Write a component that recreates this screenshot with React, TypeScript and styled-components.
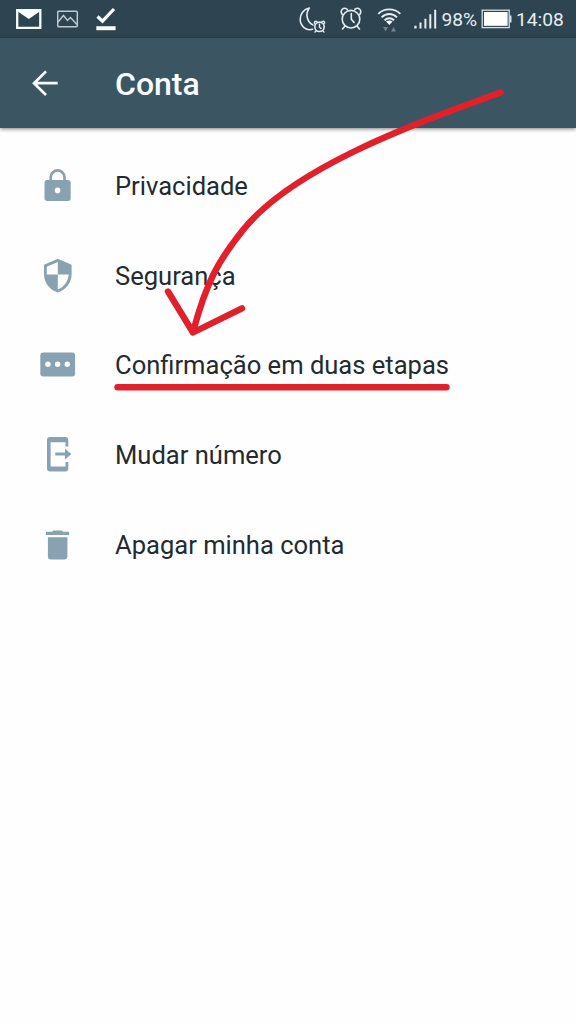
import React from "react";
import styled, { createGlobalStyle } from "styled-components";

const GlobalStyle = createGlobalStyle`
  * { box-sizing: border-box; }
  body {
    margin: 0;
    background: #fefefe;
    font-family: Roboto, "Liberation Sans", sans-serif;
  }
`;

const Screen = styled.div`
  position: relative;
  width: 576px;
  height: 1024px;
  overflow: hidden;
  background: #fefefe;
`;

const StatusBar = styled.header`
  display: flex;
  align-items: center;
  justify-content: space-between;
  height: 38px;
  padding: 0 13px 0 15px;
  background: #2f4451;
  color: #e3eef3;
`;

const StatusGroup = styled.div<{ $gap: number }>`
  display: flex;
  align-items: center;
  gap: ${(p) => p.$gap}px;
`;

const StatusText = styled.span<{ $width: number }>`
  width: ${(p) => p.$width}px;
  font-size: 19.2px;
  line-height: 38px;
  padding-top: 1px;
  text-align: right;
  white-space: nowrap;
`;

const Glyph = styled.svg`
  display: block;
  flex: none;
`;

const AppBar = styled.nav`
  display: flex;
  align-items: center;
  height: 90px;
  padding-left: 31px;
  background: #3b5563;
  color: #f6fcff;
  box-shadow: 0 1px 4px rgba(0, 0, 0, 0.5);
`;

const BackButton = styled.button`
  width: 84px;
  padding: 0;
  border: 0;
  background: none;
  color: inherit;
`;

const Title = styled.h1`
  margin: 0;
  padding-top: 1px;
  font-size: 32px;
  font-weight: 500;
  line-height: 40px;
`;

const List = styled.ul`
  margin: 0;
  padding: 13.4px 0 0;
  list-style: none;
`;

const Row = styled.li`
  display: flex;
  align-items: center;
  height: 89.6px;
`;

const IconCell = styled.span`
  display: flex;
  justify-content: center;
  width: 115px;
  color: #88a2b2;
`;

const Label = styled.span`
  color: #232b30;
  font-size: 25.55px;
  line-height: 32px;
  white-space: nowrap;
`;

const Annotation = styled.svg`
  position: absolute;
  top: 0;
  left: 0;
  pointer-events: none;
`;

const MailIcon = () => (
  <Glyph width="27" height="22" viewBox="15 8 27 22">
    <path d="M17.2 10.2H40.3V27.8H17.2Z" fill="none" stroke="#f7fcfe" strokeWidth="2.3" />
    <path d="M17 9.5H40.5V11L28.8 19L17 11Z" fill="#f7fcfe" />
  </Glyph>
);

const PictureIcon = () => (
  <Glyph width="23" height="20" viewBox="57 9 23 20" fill="none" stroke="#bccad1" strokeWidth="1.5">
    <rect x="57.7" y="11.2" width="19.6" height="15.6" rx="1" />
    <path d="M58 22L63.5 15.5L67.5 20.5L70.5 17.5L77 24.5" />
  </Glyph>
);

const DoneIcon = () => (
  <Glyph width="22" height="26" viewBox="95 6 22 26">
    <path d="M97.5 16.5L102.5 21.2L114 9" fill="none" stroke="#f7fcfe" strokeWidth="3.2" />
    <path d="M96.3 26.2H115.6V30.2H96.3Z" fill="#f7fcfe" />
  </Glyph>
);

const MoonIcon = () => (
  <Glyph width="28" height="28" viewBox="299 5 28 28" fill="none" stroke="currentColor" strokeWidth="1.6" strokeLinecap="round" strokeLinejoin="round">
    <path d="M312.6 29.3C306 31.2 300.3 26 300.2 19.6C300.1 13.7 303.9 9.2 309.3 8C305.5 13.2 306.2 21.6 313 25" />
    <circle cx="319.5" cy="26.8" r="4.7" />
    <path d="M319.5 24.2V27.3L321 28.4M314.6 23.5C313.8 21.6 315.3 20.8 317 21.7M324.4 23.5C325.2 21.6 323.7 20.8 322 21.7M316 31L315 32M323 31L324 32" strokeWidth="1.4" />
  </Glyph>
);

const AlarmIcon = () => (
  <Glyph width="24" height="26" viewBox="340 6 24 26" fill="none" stroke="currentColor" strokeWidth="1.6" strokeLinecap="round" strokeLinejoin="round">
    <circle cx="351" cy="19.2" r="8.8" />
    <path d="M351.3 13.5V19.3L354 22.4" />
    <path d="M342.2 14.5C339.5 10.5 343.4 6.4 347.3 9.3M359.8 14.5C362.5 10.5 358.6 6.4 354.7 9.3M345 26L342.5 29M357 26L359.5 29" />
  </Glyph>
);

const WifiIcon = () => (
  <Glyph width="24" height="26" viewBox="377 6 24 26" fill="none" stroke="currentColor" strokeWidth="1.9">
    <path d="M378.3 13.9C384.2 7.9 394.4 7.9 400.3 13.9M381.6 17.3C386 12.9 392.6 12.9 397 17.3M384.5 20.4C387.2 17.6 391.4 17.6 394.1 20.4" />
    <path d="M386 21.6C388 20 390.6 20 392.6 21.6L389.3 25Z" fill="#f7fcfe" stroke="none" />
    <path d="M383 27H388L385.5 31.5ZM391 31.5H396L393.5 27Z" fill="#71838d" stroke="none" />
  </Glyph>
);

const SignalIcon = () => (
  <Glyph width="23" height="22" viewBox="414 8 23 22">
    <path d="M414.3 25.8H416.6V28.6H414.3ZM419.5 22.5H421.5V28.6H419.5ZM424.4 18.7H426.4V28.6H424.4ZM429.3 14.3H431.3V28.6H429.3ZM434.2 9.7H436.2V28.6H434.2Z" fill="currentColor" />
  </Glyph>
);

const BatteryIcon = () => (
  <Glyph width="31" height="22" viewBox="481 8 31 22">
    <rect x="482.2" y="10.2" width="27" height="17.4" fill="none" stroke="#d5e0e5" strokeWidth="1.3" />
    <path d="M484 12H507.6V25.8H484Z" fill="#fff" />
    <path d="M509.5 15.5H511.5V22.5H509.5Z" fill="#d5e0e5" />
  </Glyph>
);

const BackIcon = () => (
  <Glyph width="28" height="28" viewBox="31 69 28 28" fill="none" stroke="currentColor" strokeWidth="2.7">
    <path d="M57.7 83.2H34M46 71.4L34 83.2L46 95" />
  </Glyph>
);

const LockIcon = () => (
  <Glyph width="28" height="34" viewBox="44 169 28 34">
    <path d="M50.7 181V177.3A6.9 6.9 0 0 1 64.5 177.3V181" fill="none" stroke="currentColor" strokeWidth="2.7" />
    <path fill="currentColor" fillRule="evenodd" d="M47.2 180H68A2.7 2.7 0 0 1 70.7 182.7V198.3A2.7 2.7 0 0 1 68 201H47.2A2.7 2.7 0 0 1 44.5 198.3V182.7A2.7 2.7 0 0 1 47.2 180ZM57.6 187.6A2.8 2.8 0 1 0 57.6 193.2A2.8 2.8 0 1 0 57.6 187.6Z" />
  </Glyph>
);

const ShieldIcon = () => (
  <Glyph width="30" height="36" viewBox="43 257.5 30 36">
    <path fill="currentColor" fillRule="evenodd" d="M57.8 258.2L71.6 264.2V273.5C71.6 282 66 289.6 57.8 292C49.6 289.6 44 282 44 273.5V264.2ZM57.8 261.4L46.8 266.3V274H57.8ZM57.8 274V289C63.8 286.8 68.2 280.7 68.8 274Z" />
  </Glyph>
);

const PinIcon = () => (
  <Glyph width="36" height="26" viewBox="40 352.4 36 26">
    <rect x="40.3" y="353" width="34.8" height="24" rx="3" fill="currentColor" />
    <g fill="#fefefe">
      <circle cx="47.9" cy="364.6" r="2.7" />
      <circle cx="57.6" cy="364.6" r="2.7" />
      <circle cx="67.3" cy="364.6" r="2.7" />
    </g>
  </Glyph>
);

const PhoneIcon = () => (
  <Glyph width="30" height="36" viewBox="43 437 30 36" fill="currentColor">
    <path fillRule="evenodd" d="M50 437H65.3A3 3 0 0 1 68.3 440V446.6H65.5V442.3H50.6V466.5H65.5V462H68.3V468.6A3 3 0 0 1 65.3 471.6H50A3 3 0 0 1 47 468.6V440A3 3 0 0 1 50 437Z" />
    <path d="M55.3 452.6H65V448.8L71.4 454.1L65 459.4V455.6H55.3Z" />
  </Glyph>
);

const TrashIcon = () => (
  <Glyph width="26" height="32" viewBox="45 528.6 26 32" fill="currentColor">
    <path d="M46 531.3H52L53.6 530H61.6L63.2 531.3H69.2V534.6H46Z" />
    <path d="M47.9 536.8H67.4V555.8A3.2 3.2 0 0 1 64.2 559H51.1A3.2 3.2 0 0 1 47.9 555.8Z" />
  </Glyph>
);

const items = [
  { label: "Privacidade", Icon: LockIcon },
  { label: "Segurança", Icon: ShieldIcon },
  { label: "Confirmação em duas etapas", Icon: PinIcon },
  { label: "Mudar número", Icon: PhoneIcon },
  { label: "Apagar minha conta", Icon: TrashIcon },
];

export default function App() {
  return (
    <Screen>
      <GlobalStyle />
      <StatusBar>
        <StatusGroup $gap={15}>
          <MailIcon />
          <PictureIcon />
          <DoneIcon />
        </StatusGroup>
        <StatusGroup $gap={4}>
          <StatusGroup $gap={13}>
            <MoonIcon />
            <AlarmIcon />
            <WifiIcon />
            <SignalIcon />
          </StatusGroup>
          <StatusText $width={36}>98%</StatusText>
          <BatteryIcon />
          <StatusText $width={47}>14:08</StatusText>
        </StatusGroup>
      </StatusBar>
      <AppBar>
        <BackButton aria-label="Voltar">
          <BackIcon />
        </BackButton>
        <Title>Conta</Title>
      </AppBar>
      <List>
        {items.map(({ label, Icon }) => (
          <Row key={label}>
            <IconCell>
              <Icon />
            </IconCell>
            <Label>{label}</Label>
          </Row>
        ))}
      </List>
      <Annotation width="576" height="1024" viewBox="0 0 576 1024" fill="none" stroke="#e0202b" strokeWidth="6.4" strokeLinecap="round" strokeLinejoin="round">
        <path d="M500.5 92.5C455 109 400 129 353 152S267 200 243 230S207 280 193 332" />
        <path d="M168 291.5L193 332.5L242 308.3" />
        <path d="M117.5 387.2H446.5" />
      </Annotation>
    </Screen>
  );
}
